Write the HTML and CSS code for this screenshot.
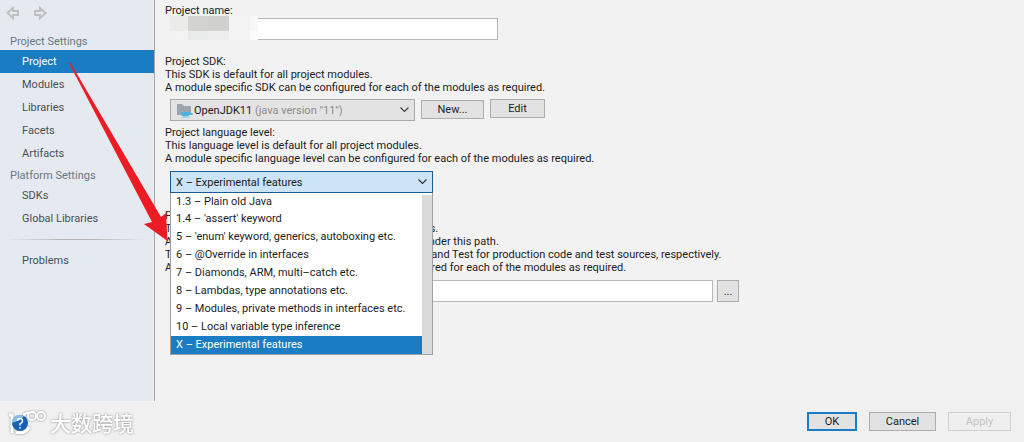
FILE: index.html
```html
<!DOCTYPE html>
<html lang="en">
<head>
<meta charset="utf-8">
<title>Project Structure</title>
<link rel="stylesheet" href="styles.css">
</head>
<body>
<div class="dialog">
  <div class="body">
    <aside class="sidebar">
      <div class="history">
        <button class="nav-btn" type="button" aria-label="Back">
          <svg width="14" height="14" viewBox="0 0 14 14"><path d="M1.500 7 7 1.800V5H12V9H7V12.200Z" fill="none" stroke="#bdbfc0" stroke-width="1.900"/></svg>
        </button>
        <button class="nav-btn" type="button" aria-label="Forward">
          <svg width="14" height="14" viewBox="0 0 14 14"><path d="M12.500 7 7 1.800V5H2V9H7V12.200Z" fill="none" stroke="#bdbfc0" stroke-width="1.900"/></svg>
        </button>
      </div>
      <nav class="nav">
        <h2 class="nav-title">Project Settings</h2>
        <a class="nav-item active" href="#project">Project</a>
        <a class="nav-item" href="#modules">Modules</a>
        <a class="nav-item" href="#libraries">Libraries</a>
        <a class="nav-item" href="#facets">Facets</a>
        <a class="nav-item" href="#artifacts">Artifacts</a>
        <h2 class="nav-title">Platform Settings</h2>
        <a class="nav-item" href="#sdks">SDKs</a>
        <a class="nav-item" href="#global">Global Libraries</a>
        <hr class="nav-rule">
        <a class="nav-item" href="#problems">Problems</a>
      </nav>
    </aside>
    <main class="content">
      <section class="group name-group">
        <label for="name">Project name:</label>
        <div class="row name-row">
          <input class="field name-field" id="name" type="text">
          <svg class="mosaic" width="88" height="24" viewBox="0 0 88 24" shape-rendering="crispEdges" aria-hidden="true">
            <path d="M0 0H88V24H0Z" fill="#f3f3f3"/>
            <path d="M0 0H18V15H0Z" fill="#ebebea"/>
            <path d="M18 0H59V15H18Z" fill="#d3d3d2"/>
            <path d="M38 0H59V15H38Z" fill="#d0d0ce"/>
            <path d="M18 15H38V24H18Z" fill="#e9ebeb"/>
            <path d="M38 15H59V24H38Z" fill="#ededed"/>
            <path d="M80 0H88V15H80Z" fill="#f8f8f8"/>
            <path d="M80 15H88V24H80Z" fill="#fcfcfc"/>
          </svg>
        </div>
      </section>
      <section class="group sdk-group">
        <label for="sdk">Project SDK:</label>
        <p>This SDK is default for all project modules.</p>
        <p>A module specific SDK can be configured for each of the modules as required.</p>
        <div class="row sdk-row">
          <button class="combo" id="sdk" type="button" aria-haspopup="listbox">
            <svg width="16" height="15" viewBox="0 0 16 15"><path d="M0 1H5L7 3H14V12H0Z" fill="#9ba6ae"/><path d="M4 9H13V10H15.500V12H12.500L11 13.500H6L4 12Z" fill="#4fb4dc"/><path d="M4 14H13V15H4Z" fill="#a9d7ea"/></svg>
            <span>OpenJDK11 <span class="muted">(java version "11")</span></span>
            <svg class="chevron" width="9" height="6" viewBox="0 0 9 6"><path d="M.5.5 4.500 4.500 8.500.5" fill="none" stroke="#444" stroke-width="1.200"/></svg>
          </button>
          <button class="btn new" type="button">New...</button>
          <button class="btn edit" type="button">Edit</button>
        </div>
      </section>
      <section class="group level-group">
        <label for="level">Project language level:</label>
        <p>This language level is default for all project modules.</p>
        <p>A module specific language level can be configured for each of the modules as required.</p>
        <div class="level">
          <select class="level-select" id="level"><option>X – Experimental features</option></select>
          <svg class="level-chevron" width="9" height="6" viewBox="0 0 9 6" aria-hidden="true"><path d="M.5.5 4.500 4.500 8.500.5" fill="none" stroke="#333" stroke-width="1.200"/></svg>
          <div class="popup">
            <ul class="options" role="listbox" aria-label="Project language level">
              <li role="option">1.3 – Plain old Java</li>
              <li role="option">1.4 – 'assert' keyword</li>
              <li role="option">5 – 'enum' keyword, generics, autoboxing etc.</li>
              <li role="option">6 – @Override in interfaces</li>
              <li role="option">7 – Diamonds, ARM, multi–catch etc.</li>
              <li role="option">8 – Lambdas, type annotations etc.</li>
              <li role="option">9 – Modules, private methods in interfaces etc.</li>
              <li role="option">10 – Local variable type inference</li>
              <li class="selected" role="option" aria-selected="true">X – Experimental features</li>
            </ul>
            <div class="scrollbar"></div>
          </div>
        </div>
      </section>
      <section class="group output-group">
        <label for="output">Project compiler output:</label>
        <p>This path is used to store all project compilation results.</p>
        <p>A directory corresponding to each module is created under this path.</p>
        <p>This directory contains two subdirectories: Production and Test for production code and test sources, respectively.</p>
        <p>A module specific compiler output path can be configured for each of the modules as required.</p>
        <div class="row output-row">
          <input class="field output-field" id="output" type="text">
          <button class="btn browse" type="button" aria-label="Browse">...</button>
        </div>
      </section>
    </main>
  </div>
  <footer class="footer">
    <div class="brand">
      <svg width="40" height="28" viewBox="0 0 40 28" aria-hidden="true">
        <g class="logo-lines" fill="none" stroke="#fff">
          <path d="M2 7H5V25M22 19Q18 27 9 24" stroke-width="3"/>
          <path d="M17 11V5M17 9Q18 4 22 5" stroke-width="2"/>
          <circle cx="25" cy="8" r="4" stroke-width="2"/>
          <circle cx="34" cy="8" r="4" stroke-width="2"/>
        </g>
        <circle cx="13" cy="15" r="8" fill="#1762b5"/>
        <path d="M5 15A8 8 0 0 1 17 8Q13 13 5 15Z" fill="#8bbde6"/>
        <path d="M10.500 13Q10.500 10.500 13 10.500T15.500 13Q15.500 14.500 13 16V17.500M13 19V20.500" fill="none" stroke="#fff" stroke-width="1.500"/>
      </svg>
      <span class="brand-name" lang="zh">大数跨境</span>
    </div>
    <div class="actions">
      <button class="btn ok" type="button">OK</button>
      <button class="btn cancel" type="button">Cancel</button>
      <button class="btn apply" type="button" disabled>Apply</button>
    </div>
  </footer>
  <svg class="pointer" width="100" height="180" viewBox="0 0 100 180" aria-hidden="true">
    <path d="M0 0 1.500 0 92 154 97 150 98.500 178 75 161 83 159Z" fill="#ed1c24"/>
  </svg>
</div>
</body>
</html>
```
FILE: styles.css
```css
* { box-sizing: border-box; }
body {
  margin: 0;
  background: #f2f2f2;
  color: #1c1c1c;
  font: 11px/13px Roboto, "Liberation Sans", sans-serif;
}
button, input, select { font: inherit; color: inherit; margin: 0; border-radius: 0; }
p, h2, ul { margin: 0; padding: 0; }
.dialog { position: relative; display: flex; flex-direction: column; min-height: 100vh; }
.body { flex: 1; display: flex; }

.sidebar {
  flex: 0 0 154px;
  background: #e4eaef;
  border-right: 1px solid #a6a8ab;
}
.history { display: flex; gap: 13px; padding: 6px 6px 0; }
.nav-btn { display: flex; padding: 0; border: 0; background: none; }
.nav { display: flex; flex-direction: column; padding-top: 14px; }
.nav-title { padding: 0 10px; font-size: 11px; line-height: 16px; font-weight: 400; color: #6b7683; }
.nav-item + .nav-title { padding-top: 3px; }
.nav-item { padding: 0 22px; line-height: 23px; color: #4a4f55; text-decoration: none; }
.nav-item.active { background: #1a7dc4; color: #fff; }
.nav-rule {
  width: 140px; height: 1px; margin: 9px 7px; border: 0;
  background: linear-gradient(90deg, transparent, #b4b4b4 40%, #b4b4b4 60%, transparent);
}

.content { flex: 1; padding: 4px 10px 10px; }
.group { display: flex; flex-direction: column; align-items: stretch; white-space: nowrap; }
.row { display: flex; padding-left: 5px; }
.field { height: 22px; padding: 0 6px; border: 1px solid #b7b7b7; background: #fff; }
.name-row { position: relative; padding-top: 1px; }
.name-field { width: 328px; }
.mosaic { position: absolute; left: 5px; top: -1px; }
.sdk-group { padding-top: 15px; }
.sdk-row { gap: 6px; padding-top: 5px; }
.combo {
  display: flex; align-items: center; gap: 1px; width: 245px; height: 22px;
  padding: 0 5px 0 6px; border: 1px solid #a9a9a9; background: #e3e3e3; text-align: left;
}
.chevron { margin-left: auto; }
.muted { color: #8c8c8c; }
.btn { height: 19px; padding: 0; border: 1px solid #adadad; background: #e2e2e2; text-align: center; }
.new { width: 63px; margin-top: 1px; }
.edit { width: 55px; }
.level-group { padding-top: 5px; }
.level { position: relative; width: 263px; margin: 6px 0 0 5px; }
.level-select {
  display: block; appearance: none; width: 100%; height: 22px; padding: 0 5px;
  border: 1px solid #1d5c91; background: #cce4f7;
}
.level-chevron { position: absolute; right: 6px; top: 8px; pointer-events: none; }
.popup {
  position: absolute; z-index: 1; top: 22px; left: 0; right: 0; display: flex;
  border: 1px solid #a0a0a0; border-top: 0; background: #fff;
}
.options { flex: 1; min-width: 0; list-style: none; }
.options li { padding: 0 5px; line-height: 18px; }
.options li:first-child { line-height: 17px; }
.options .selected { background: #1a7dc4; color: #fff; }
.scrollbar { flex: none; width: 10px; margin-top: 2px; background: #dadada; }
.output-group { padding-top: 16px; }
.output-row { gap: 4px; padding-top: 6px; }
.output-field { width: 543px; }
.browse { width: 22px; height: 22px; }

.footer {
  display: flex; align-items: center; justify-content: space-between;
  height: 41px; padding: 0 13px 0 7px; background: #f0f0f0;
}
.brand { display: flex; align-items: center; gap: 3px; }
.logo-lines, .brand-name { filter: drop-shadow(0 0 1px #888); }
.brand-name { color: #fff; font: 500 21px/28px "Noto Sans CJK SC", sans-serif; }
.actions { display: flex; gap: 12px; }
.ok { width: 50px; border: 2px solid #1a7dc4; }
.cancel { width: 67px; }
.apply { width: 63px; border-color: #cfcfcf; background: #efefef; color: #c3c3c3; }
.pointer { position: absolute; z-index: 2; left: 69px; top: 63px; pointer-events: none; }
```
